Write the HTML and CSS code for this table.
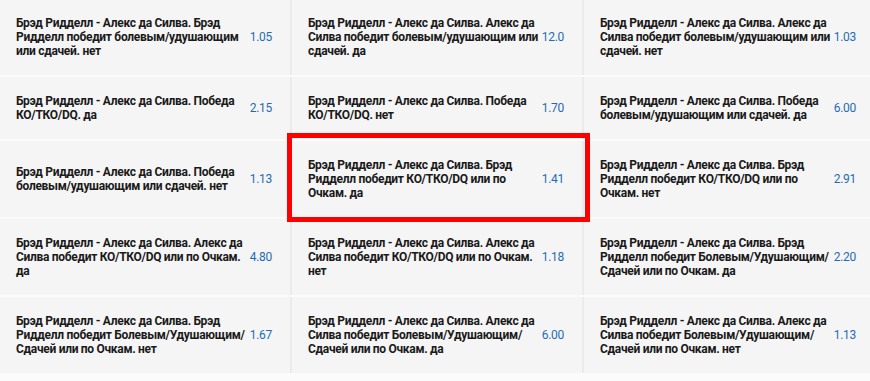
FILE: index.html
```html
<!DOCTYPE html>
<html lang="ru">
<head>
<meta charset="utf-8">
<link rel="stylesheet" href="styles.css">
</head>
<body>
<div class="board">
  <div class="grid">
    <div class="cell"><span class="name">Брэд Ридделл - Алекс да Силва. Брэд Ридделл победит болевым/удушающим или сдачей. нет</span><span class="odd">1.05</span></div>
    <div class="cell"><span class="name">Брэд Ридделл - Алекс да Силва. Алекс да Силва победит болевым/удушающим или сдачей. да</span><span class="odd">12.0</span></div>
    <div class="cell"><span class="name">Брэд Ридделл - Алекс да Силва. Алекс да Силва победит болевым/удушающим или сдачей. нет</span><span class="odd">1.03</span></div>

    <div class="cell"><span class="name">Брэд Ридделл - Алекс да Силва. Победа КО/ТКО/DQ. да</span><span class="odd">2.15</span></div>
    <div class="cell"><span class="name">Брэд Ридделл - Алекс да Силва. Победа КО/ТКО/DQ. нет</span><span class="odd">1.70</span></div>
    <div class="cell"><span class="name">Брэд Ридделл - Алекс да Силва. Победа болевым/удушающим или сдачей. да</span><span class="odd">6.00</span></div>

    <div class="cell"><span class="name">Брэд Ридделл - Алекс да Силва. Победа болевым/удушающим или сдачей. нет</span><span class="odd">1.13</span></div>
    <div class="cell"><span class="name">Брэд Ридделл - Алекс да Силва. Брэд Ридделл победит КО/ТКО/DQ или по Очкам. да</span><span class="odd">1.41</span></div>
    <div class="cell"><span class="name">Брэд Ридделл - Алекс да Силва. Брэд Ридделл победит КО/ТКО/DQ или по Очкам. нет</span><span class="odd">2.91</span></div>

    <div class="cell"><span class="name">Брэд Ридделл - Алекс да Силва. Алекс да Силва победит КО/ТКО/DQ или по Очкам. да</span><span class="odd">4.80</span></div>
    <div class="cell"><span class="name">Брэд Ридделл - Алекс да Силва. Алекс да Силва победит КО/ТКО/DQ или по Очкам. нет</span><span class="odd">1.18</span></div>
    <div class="cell"><span class="name">Брэд Ридделл - Алекс да Силва. Брэд Ридделл победит Болевым/Удушающим/Сдачей или по Очкам. да</span><span class="odd">2.20</span></div>

    <div class="cell"><span class="name">Брэд Ридделл - Алекс да Силва. Брэд Ридделл победит Болевым/Удушающим/Сдачей или по Очкам. нет</span><span class="odd">1.67</span></div>
    <div class="cell"><span class="name">Брэд Ридделл - Алекс да Силва. Алекс да Силва победит Болевым/Удушающим/Сдачей или по Очкам. да</span><span class="odd">6.00</span></div>
    <div class="cell"><span class="name">Брэд Ридделл - Алекс да Силва. Алекс да Силва победит Болевым/Удушающим/Сдачей или по Очкам. нет</span><span class="odd">1.13</span></div>
  </div>
  <div class="highlight"></div>
</div>
</body>
</html>
```
FILE: styles.css
```css
html, body {
  margin: 0;
  padding: 0;
  background: #fbfbfb;
  overflow: hidden;
}
.board {
  position: relative;
  width: 876px;
  margin-top: -1px;
  font-family: Roboto, "Noto Sans", sans-serif;
}
.grid {
  display: grid;
  grid-template-columns: 292px 292px 292px;
  row-gap: 2px;
}
.cell {
  display: flex;
  align-items: center;
  background: #f5f5f5;
  border-right: 2px solid #ebebeb;
  padding: 17px 18px 17px 16px;
}
.name {
  flex: 1;
  font-size: 12px;
  line-height: 14px;
  font-weight: 700;
  letter-spacing: -0.3px;
  color: #1a1a1a;
}
.odd {
  margin-left: 1px;
  font-size: 12px;
  line-height: 14px;
  letter-spacing: -0.3px;
  color: #1f6cb3;
  white-space: nowrap;
}
.highlight {
  position: absolute;
  left: 287px;
  top: 134px;
  width: 303px;
  height: 89px;
  box-sizing: border-box;
  border: 5px solid #ff0000;
}
```
